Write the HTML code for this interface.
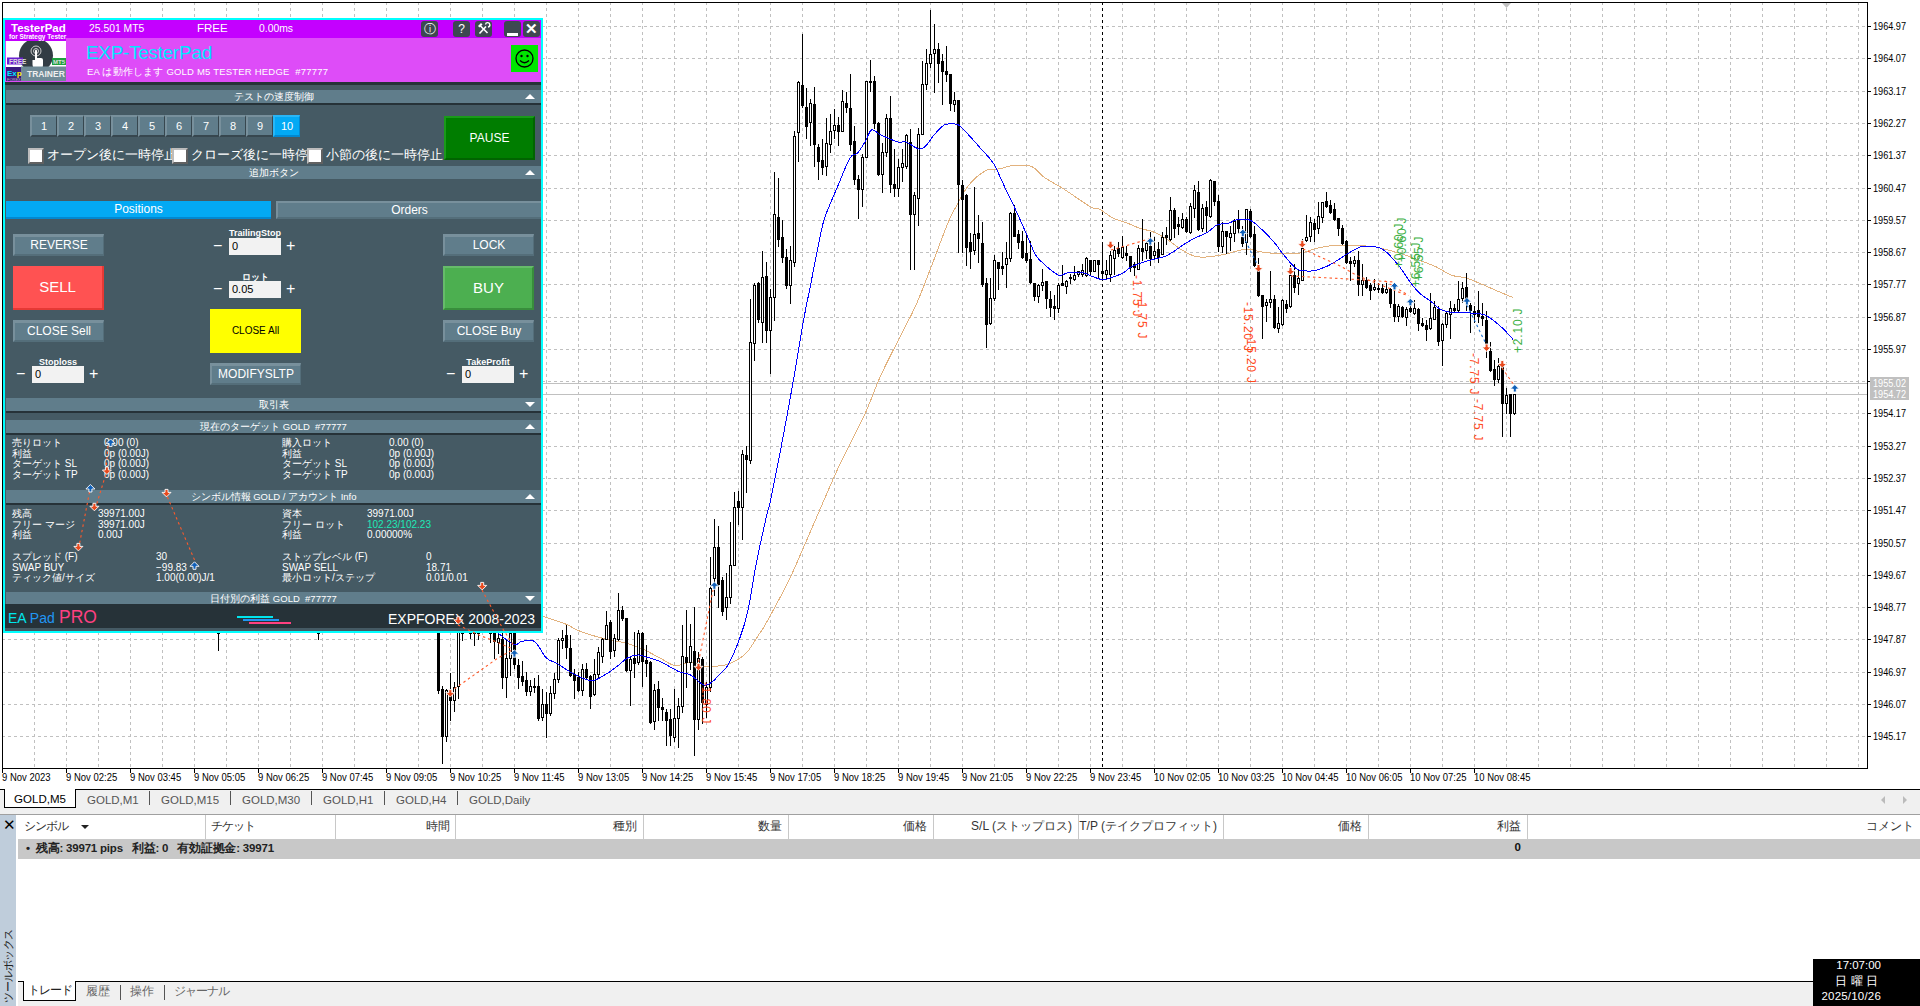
<!DOCTYPE html>
<html><head><meta charset="utf-8">
<style>
*{margin:0;padding:0;box-sizing:border-box}
html,body{width:1920px;height:1006px;overflow:hidden;background:#fff;font-family:"Liberation Sans",sans-serif}
.abs{position:absolute}
.chart{position:absolute;left:0;top:0}
#panel{position:absolute;left:3px;top:18px;width:540px;height:615px;background:#455a64;border:2px solid #00ffff;overflow:hidden}
#panel .p{position:absolute;white-space:nowrap}
.hdr1{left:0;top:0;width:536px;height:18px;background:#c400ff}
.hdr2{left:0;top:18px;width:536px;height:44px;background:#de4cf8}
.sec{left:1px;width:535px;height:15px;background:#607d8b;border-bottom:2px solid #263238;color:#fff;font-size:9.5px;line-height:13px;text-align:center}
.tri-up{position:absolute;right:6px;top:4px;width:0;height:0;border-left:5px solid transparent;border-right:5px solid transparent;border-bottom:5px solid #fff}
.tri-dn{position:absolute;right:6px;top:4px;width:0;height:0;border-left:5px solid transparent;border-right:5px solid transparent;border-top:5px solid #fff}
.nb{top:95px;width:27px;height:22px;background:#607d8b;border-left:2px solid #78909c;border-top:2px solid #78909c;border-right:1px solid #37474f;border-bottom:2px solid #37474f;color:#fff;font-size:11px;line-height:19px;text-align:center}
.btn{background:#607d8b;border-left:2px solid #78909c;border-top:3px solid #78909c;border-right:1px solid #546e7a;border-bottom:2px solid #546e7a;color:#fff;font-size:12px;text-align:center}
.inp{background:#f2f2f2;color:#000;font-size:11px;line-height:17px;padding-left:3px}
.pm{color:#fff;font-size:16px;line-height:16px}
.lbl{color:#fff;font-size:9px;font-weight:bold;text-align:center}
.row{color:#fff;font-size:10px;line-height:10.7px}
.cb{width:16px;height:16px;background:#fff;border-left:2px solid #bdbdbd;border-top:2px solid #bdbdbd;border-right:2px solid #616161;border-bottom:2px solid #616161}
.hb{top:1px;width:17px;height:16px;background:#3e4852;border-radius:3px;color:#fff;font-size:12px;line-height:16px;text-align:center}
.tabbar{position:absolute;left:0;top:789px;width:1920px;height:26px;background:#f0f0f0;border-top:1px solid #000}
.tab{position:absolute;top:0;height:26px;font-family:"Liberation Sans",sans-serif;font-size:12px;line-height:20px;color:#555}
</style></head><body>
<svg class="chart" width="1920" height="789" viewBox="0 0 1920 789" shape-rendering="crispEdges">
<rect x="0" y="0" width="1920" height="789" fill="#fff"/>
<path d="M34.5 2V768 M66.5 2V768 M98.5 2V768 M130.5 2V768 M162.5 2V768 M194.5 2V768 M226.5 2V768 M258.5 2V768 M290.5 2V768 M322.5 2V768 M354.5 2V768 M386.5 2V768 M418.5 2V768 M450.5 2V768 M482.5 2V768 M514.5 2V768 M546.5 2V768 M578.5 2V768 M610.5 2V768 M642.5 2V768 M674.5 2V768 M706.5 2V768 M738.5 2V768 M770.5 2V768 M802.5 2V768 M834.5 2V768 M866.5 2V768 M898.5 2V768 M930.5 2V768 M962.5 2V768 M994.5 2V768 M1026.5 2V768 M1058.5 2V768 M1090.5 2V768 M1122.5 2V768 M1154.5 2V768 M1186.5 2V768 M1218.5 2V768 M1250.5 2V768 M1282.5 2V768 M1314.5 2V768 M1346.5 2V768 M1378.5 2V768 M1410.5 2V768 M1442.5 2V768 M1474.5 2V768 M1506.5 2V768 M1538.5 2V768 M1570.5 2V768 M1602.5 2V768 M1634.5 2V768 M1666.5 2V768 M1698.5 2V768 M1730.5 2V768 M1762.5 2V768 M1794.5 2V768 M1826.5 2V768 M1858.5 2V768 M2 26.5H1867 M2 58.5H1867 M2 91.5H1867 M2 123.5H1867 M2 155.5H1867 M2 188.5H1867 M2 220.5H1867 M2 252.5H1867 M2 284.5H1867 M2 317.5H1867 M2 349.5H1867 M2 381.5H1867 M2 413.5H1867 M2 446.5H1867 M2 478.5H1867 M2 510.5H1867 M2 543.5H1867 M2 575.5H1867 M2 607.5H1867 M2 639.5H1867 M2 672.5H1867 M2 704.5H1867 M2 736.5H1867" stroke="#c0c0c0" stroke-width="1" stroke-dasharray="3 3" fill="none"/>
<path d="M3 383.5H1867M3 394.5H1867" stroke="#c0c0c0" stroke-width="1" fill="none"/>
<path d="M1102.5 2V768" stroke="#000" stroke-width="1" stroke-dasharray="3 3" fill="none"/>
<path d="M1502 3H1511L1506.5 8Z" fill="#c0c0c0" shape-rendering="auto"/>
<path d="M542 616 C545.8 617.3 558.6 621.2 564.9 623.7 C571.1 626.2 573.2 628.6 579.5 631 C585.8 633.4 594.5 636.2 602.5 638.3 C610.5 640.4 620.5 641.6 627.5 643.5 C634.5 645.4 638.8 647.4 644.2 649.8 C649.6 652.2 654.8 655.4 660 658 C665.2 660.6 670.1 664.9 675.2 665.6 C680.3 666.3 685.3 662.1 690.4 662.2 C695.5 662.4 699.7 666.1 705.6 666.5 C711.5 666.9 720.5 665.9 725.9 664.8 C731.2 663.7 734 662 737.7 659.7 C741.4 657.4 744.2 655.7 747.9 651.2 C751.6 646.7 757.5 636.4 760 632.7 C762.5 629 760.1 633.6 762.8 629 C765.5 624.4 771.3 613.8 776 605 C780.7 596.2 784.4 590.3 790.9 576.2 C797.4 562.1 807.1 539.1 815.2 520.5 C823.3 501.9 831.5 482.2 839.6 464.8 C847.7 447.4 857 431.1 864 416 C871 400.9 874.9 388.3 881.3 374.4 C887.7 360.5 896.4 344.2 902.2 332.6 C908 321 911.5 315.2 916.1 304.8 C920.7 294.4 924.7 283.7 930 270 C935.3 256.3 943.6 233.4 948 222.7 C952.4 212 953 212.2 956.4 206 C959.8 199.8 963.7 191.3 968.5 185.5 C973.3 179.7 980 173.7 985.2 170.9 C990.4 168.1 995.3 169.7 999.8 168.8 C1004.3 167.9 1007.2 166.1 1012.4 165.7 C1017.6 165.3 1026 164.4 1031.2 166.3 C1036.4 168.2 1039.6 174 1043.7 177 C1047.8 180 1052.4 182.2 1056 184.4 C1059.6 186.6 1059.6 186.3 1065.3 190 C1071 193.7 1084.5 203.4 1090.3 206.7 C1096.1 209.9 1096.3 207.7 1100 209.5 C1103.7 211.3 1107.9 215.5 1112.6 217.8 C1117.2 220.1 1123 221.5 1127.9 223.4 C1132.8 225.3 1137.8 227.7 1141.8 229 C1145.8 230.3 1147.6 229.7 1151.6 231.2 C1155.5 232.7 1160.6 235.2 1165.5 238.2 C1170.4 241.2 1175.9 246.3 1180.8 249.3 C1185.7 252.3 1190.5 254.9 1194.7 256.2 C1198.9 257.5 1201.2 257.2 1205.8 257 C1210.4 256.8 1215.8 256.1 1222.5 254.8 C1229.2 253.5 1239.1 249.7 1246 249.3 C1252.9 248.9 1257 251.6 1263.9 252.4 C1270.9 253.2 1281.1 254 1287.7 254 C1294.3 254 1298.3 253.5 1303.6 252.4 C1308.9 251.3 1313.4 248.8 1319.5 247.6 C1325.6 246.4 1332 245.4 1340 245.2 C1348 244.9 1361.3 245.7 1367.8 246.1 C1374.3 246.5 1373.7 246.5 1379 247.7 C1384.3 248.9 1393.5 251.5 1399.6 253.3 C1405.7 255.2 1409.4 256.6 1415.5 258.8 C1421.6 261.1 1430 264.1 1436 266.8 C1442 269.5 1446.5 273.4 1451.5 275.2 C1456.5 277 1460.4 276.3 1465.8 277.9 C1471.2 279.5 1478.3 282.8 1483.7 285 C1489.1 287.2 1493.1 289.2 1498 291.3 C1502.9 293.4 1510.7 296.6 1513.2 297.6" stroke="#e2b27e" stroke-width="1" fill="none" shape-rendering="crispEdges"/>
<path d="M218.5 632V651 M318.5 632V640 M438.5 632V694 M442.5 686V764 M446.5 689V742 M450.5 673V721 M454.5 682V712 M458.5 632V699 M462.5 632V641 M470.5 632V639 M474.5 632V646 M478.5 632V640 M490.5 632V643 M494.5 632V659 M498.5 632V654 M502.5 632V689 M506.5 640V698 M510.5 632V676 M514.5 632V669 M518.5 659V689 M522.5 661V686 M526.5 672V696 M530.5 680V696 M534.5 678V693 M538.5 675V721 M542.5 689V721 M546.5 692V738 M550.5 686V716 M554.5 673V699 M558.5 638V683 M562.5 630V649 M566.5 625V659 M570.5 635V677 M574.5 669V699 M578.5 672V692 M582.5 664V696 M586.5 663V680 M590.5 675V709 M594.5 659V696 M598.5 647V678 M602.5 638V663 M606.5 611V640 M610.5 620V659 M614.5 634V657 M618.5 593V641 M622.5 606V621 M626.5 618V672 M630.5 656V706 M634.5 632V678 M638.5 630V665 M642.5 632V687 M646.5 645V677 M650.5 661V724 M654.5 684V730 M658.5 681V721 M662.5 698V721 M666.5 709V746 M670.5 709V746 M674.5 689V742 M678.5 698V748 M682.5 625V713 M686.5 610V688 M690.5 624V670 M694.5 607V756 M698.5 652V730 M702.5 657V724 M706.5 682V718 M710.5 557V692 M714.5 519V596 M718.5 526V608 M722.5 577V616 M726.5 573V620 M730.5 522V604 M734.5 492V566 M738.5 491V525 M742.5 450V540 M746.5 446V493 M750.5 299V464 M754.5 283V361 M758.5 282V323 M762.5 251V343 M766.5 262V343 M770.5 289V374 M774.5 172V321 M778.5 178V247 M782.5 220V263 M786.5 249V289 M790.5 246V304 M794.5 131V267 M798.5 81V162 M802.5 34V108 M806.5 88V139 M810.5 99V146 M814.5 87V167 M818.5 144V180 M822.5 139V175 M826.5 118V176 M830.5 114V153 M834.5 109V139 M838.5 117V146 M842.5 90V132 M846.5 92V113 M850.5 74V151 M854.5 126V185 M858.5 175V219 M862.5 154V207 M866.5 81V158 M870.5 60V92 M874.5 76V129 M878.5 122V176 M882.5 143V193 M886.5 114V157 M890.5 96V193 M894.5 149V197 M898.5 159V197 M902.5 149V182 M906.5 134V169 M910.5 129V270 M914.5 192V270 M918.5 128V226 M922.5 61V135 M926.5 49V90 M930.5 10V68 M934.5 24V93 M938.5 43V83 M942.5 54V105 M946.5 46V82 M950.5 74V111 M954.5 92V112 M958.5 100V253 M962.5 180V253 M966.5 194V266 M970.5 233V269 M974.5 187V255 M978.5 215V263 M982.5 222V287 M986.5 278V348 M990.5 278V325 M994.5 255V301 M998.5 262V290 M1002.5 252V275 M1006.5 242V288 M1010.5 212V262 M1014.5 205V237 M1018.5 230V249 M1022.5 231V259 M1026.5 233V263 M1030.5 241V284 M1034.5 283V301 M1038.5 284V303 M1042.5 269V291 M1046.5 281V309 M1050.5 291V317 M1054.5 295V320 M1058.5 283V313 M1062.5 265V286 M1066.5 280V294 M1070.5 274V284 M1074.5 266V281 M1078.5 271V277 M1082.5 264V277 M1086.5 257V277 M1090.5 260V276 M1094.5 260V272 M1098.5 260V279 M1102.5 242V281 M1106.5 260V280 M1110.5 251V282 M1114.5 246V275 M1118.5 242V257 M1122.5 236V259 M1126.5 246V261 M1130.5 256V272 M1134.5 262V276 M1138.5 245V270 M1142.5 219V261 M1146.5 241V259 M1150.5 232V266 M1154.5 237V259 M1158.5 242V263 M1162.5 232V255 M1166.5 227V245 M1170.5 197V241 M1174.5 208V238 M1178.5 217V235 M1182.5 213V229 M1186.5 217V233 M1190.5 203V234 M1194.5 185V218 M1198.5 181V231 M1202.5 204V232 M1206.5 201V233 M1210.5 179V218 M1214.5 181V206 M1218.5 195V252 M1222.5 222V253 M1226.5 231V254 M1230.5 226V251 M1234.5 219V242 M1238.5 210V234 M1242.5 226V247 M1246.5 209V255 M1250.5 209V238 M1254.5 226V267 M1258.5 258V297 M1262.5 295V339 M1266.5 299V322 M1270.5 271V308 M1274.5 295V329 M1278.5 307V333 M1282.5 299V326 M1286.5 300V313 M1290.5 265V308 M1294.5 264V293 M1298.5 270V295 M1302.5 239V281 M1306.5 215V242 M1310.5 217V242 M1314.5 219V242 M1318.5 202V234 M1322.5 202V223 M1326.5 192V208 M1330.5 200V214 M1334.5 203V221 M1338.5 218V236 M1342.5 225V245 M1346.5 240V264 M1350.5 257V281 M1354.5 256V267 M1358.5 251V296 M1362.5 264V296 M1366.5 277V289 M1370.5 283V300 M1374.5 279V291 M1378.5 283V293 M1382.5 284V294 M1386.5 283V294 M1390.5 288V308 M1394.5 289V322 M1398.5 304V322 M1402.5 306V318 M1406.5 307V326 M1410.5 301V313 M1414.5 300V315 M1418.5 308V331 M1422.5 318V327 M1426.5 320V341 M1430.5 293V330 M1434.5 301V320 M1438.5 306V346 M1442.5 323V366 M1446.5 311V328 M1450.5 301V339 M1454.5 304V313 M1458.5 281V312 M1462.5 282V303 M1466.5 273V311 M1470.5 303V333 M1474.5 306V323 M1478.5 291V323 M1482.5 303V326 M1486.5 311V358 M1490.5 342V372 M1494.5 360V386 M1498.5 358V383 M1502.5 362V437 M1506.5 388V414 M1510.5 394V437 M1514.5 394V415" stroke="#000" stroke-width="1" fill="none"/>
<path d="M217 632h3v2h-3Z M317 632h3v2h-3Z M437 632h3v59h-3Z M441 689h3v48h-3Z M449 695h3v6h-3Z M461 632h3v2h-3Z M469 632h3v2h-3Z M473 632h3v2h-3Z M477 632h3v2h-3Z M489 632h3v2h-3Z M493 632h3v10h-3Z M501 639h3v39h-3Z M513 632h3v33h-3Z M517 665h3v13h-3Z M521 676h3v6h-3Z M525 680h3v12h-3Z M533 686h3v2h-3Z M537 686h3v33h-3Z M545 704h3v10h-3Z M565 635h3v13h-3Z M569 648h3v28h-3Z M573 674h3v7h-3Z M577 677h3v14h-3Z M585 669h3v9h-3Z M589 676h3v21h-3Z M609 622h3v30h-3Z M621 610h3v9h-3Z M625 618h3v53h-3Z M633 658h3v6h-3Z M641 633h3v29h-3Z M645 660h3v4h-3Z M649 662h3v61h-3Z M657 689h3v19h-3Z M661 707h3v3h-3Z M665 712h3v9h-3Z M669 719h3v17h-3Z M685 657h3v6h-3Z M693 651h3v69h-3Z M701 659h3v44h-3Z M717 547h3v38h-3Z M721 580h3v32h-3Z M737 501h3v7h-3Z M745 455h3v5h-3Z M757 283h3v37h-3Z M765 276h3v55h-3Z M777 217h3v23h-3Z M781 237h3v21h-3Z M785 257h3v29h-3Z M801 85h3v21h-3Z M805 107h3v20h-3Z M813 104h3v41h-3Z M817 147h3v15h-3Z M821 160h3v8h-3Z M837 125h3v7h-3Z M845 103h3v5h-3Z M849 108h3v37h-3Z M853 141h3v39h-3Z M857 179h3v11h-3Z M869 81h3v2h-3Z M873 81h3v43h-3Z M877 123h3v52h-3Z M889 118h3v67h-3Z M893 184h3v5h-3Z M909 142h3v73h-3Z M937 49h3v15h-3Z M941 61h3v11h-3Z M945 71h3v4h-3Z M949 74h3v30h-3Z M957 100h3v85h-3Z M961 185h3v15h-3Z M965 195h3v53h-3Z M969 242h3v10h-3Z M977 233h3v6h-3Z M981 243h3v42h-3Z M985 283h3v42h-3Z M997 262h3v7h-3Z M1001 266h3v3h-3Z M1013 213h3v24h-3Z M1017 234h3v9h-3Z M1021 241h3v17h-3Z M1025 253h3v8h-3Z M1029 259h3v24h-3Z M1033 283h3v14h-3Z M1045 281h3v18h-3Z M1049 299h3v9h-3Z M1053 306h3v3h-3Z M1061 283h3v3h-3Z M1069 277h3v2h-3Z M1089 260h3v12h-3Z M1097 260h3v5h-3Z M1101 271h3v3h-3Z M1117 248h3v6h-3Z M1125 253h3v3h-3Z M1129 256h3v12h-3Z M1133 264h3v4h-3Z M1141 248h3v4h-3Z M1149 246h3v13h-3Z M1157 249h3v9h-3Z M1165 235h3v3h-3Z M1173 210h3v19h-3Z M1177 224h3v3h-3Z M1185 219h3v13h-3Z M1197 192h3v38h-3Z M1205 207h3v9h-3Z M1213 181h3v21h-3Z M1217 201h3v46h-3Z M1225 231h3v6h-3Z M1237 219h3v10h-3Z M1241 237h3v7h-3Z M1249 211h3v26h-3Z M1253 234h3v32h-3Z M1257 269h3v27h-3Z M1261 295h3v12h-3Z M1273 299h3v29h-3Z M1285 304h3v5h-3Z M1293 275h3v13h-3Z M1313 223h3v7h-3Z M1325 201h3v6h-3Z M1329 205h3v8h-3Z M1333 209h3v11h-3Z M1337 218h3v11h-3Z M1341 228h3v16h-3Z M1345 241h3v22h-3Z M1349 261h3v3h-3Z M1357 260h3v25h-3Z M1365 280h3v8h-3Z M1369 285h3v6h-3Z M1377 288h3v2h-3Z M1381 288h3v5h-3Z M1389 289h3v15h-3Z M1393 304h3v13h-3Z M1401 307h3v10h-3Z M1409 308h3v4h-3Z M1417 309h3v15h-3Z M1421 323h3v3h-3Z M1425 325h3v5h-3Z M1437 309h3v33h-3Z M1453 308h3v3h-3Z M1465 287h3v12h-3Z M1469 305h3v6h-3Z M1473 311h3v4h-3Z M1477 310h3v7h-3Z M1481 316h3v3h-3Z M1485 320h3v25h-3Z M1489 351h3v20h-3Z M1493 369h3v11h-3Z M1501 366h3v38h-3Z M1509 394h3v20h-3Z" fill="#000"/>
<path d="M445 690h3v47h-3Z M453 687h3v14h-3Z M457 632h3v55h-3Z M497 638h3v5h-3Z M505 658h3v20h-3Z M509 633h3v26h-3Z M529 686h3v6h-3Z M541 704h3v14h-3Z M549 693h3v21h-3Z M553 679h3v15h-3Z M557 640h3v40h-3Z M561 638h3v3h-3Z M581 669h3v22h-3Z M593 674h3v21h-3Z M597 652h3v23h-3Z M601 639h3v18h-3Z M605 625h3v15h-3Z M613 638h3v13h-3Z M617 610h3v30h-3Z M629 659h3v12h-3Z M637 633h3v30h-3Z M653 690h3v32h-3Z M673 718h3v20h-3Z M677 706h3v13h-3Z M681 656h3v51h-3Z M689 646h3v17h-3Z M697 658h3v62h-3Z M705 687h3v18h-3Z M709 588h3v100h-3Z M713 547h3v32h-3Z M725 597h3v11h-3Z M729 565h3v33h-3Z M733 507h3v59h-3Z M741 454h3v54h-3Z M749 342h3v119h-3Z M753 285h3v59h-3Z M761 277h3v46h-3Z M769 297h3v34h-3Z M773 214h3v84h-3Z M789 260h3v26h-3Z M793 136h3v127h-3Z M797 82h3v51h-3Z M809 103h3v20h-3Z M825 143h3v24h-3Z M829 131h3v14h-3Z M833 125h3v6h-3Z M841 101h3v31h-3Z M861 157h3v33h-3Z M865 81h3v77h-3Z M881 152h3v23h-3Z M885 118h3v35h-3Z M897 167h3v22h-3Z M901 163h3v5h-3Z M905 135h3v32h-3Z M913 195h3v20h-3Z M917 134h3v65h-3Z M921 84h3v51h-3Z M925 63h3v22h-3Z M929 54h3v10h-3Z M933 49h3v5h-3Z M953 100h3v5h-3Z M973 234h3v17h-3Z M989 298h3v26h-3Z M993 260h3v39h-3Z M1005 258h3v7h-3Z M1009 213h3v46h-3Z M1037 285h3v12h-3Z M1041 282h3v4h-3Z M1057 285h3v24h-3Z M1065 281h3v6h-3Z M1073 275h3v5h-3Z M1077 271h3v4h-3Z M1081 270h3v5h-3Z M1085 258h3v18h-3Z M1093 260h3v12h-3Z M1105 270h3v5h-3Z M1109 255h3v20h-3Z M1113 250h3v9h-3Z M1121 247h3v11h-3Z M1137 248h3v22h-3Z M1145 243h3v8h-3Z M1153 251h3v5h-3Z M1161 237h3v18h-3Z M1169 210h3v30h-3Z M1181 219h3v9h-3Z M1189 206h3v27h-3Z M1193 190h3v19h-3Z M1201 208h3v21h-3Z M1209 180h3v37h-3Z M1221 231h3v16h-3Z M1229 233h3v5h-3Z M1233 221h3v13h-3Z M1245 209h3v34h-3Z M1265 302h3v4h-3Z M1269 299h3v4h-3Z M1277 323h3v6h-3Z M1281 300h3v25h-3Z M1289 275h3v32h-3Z M1297 278h3v6h-3Z M1301 248h3v33h-3Z M1305 237h3v4h-3Z M1309 222h3v15h-3Z M1317 216h3v13h-3Z M1321 202h3v16h-3Z M1353 260h3v4h-3Z M1361 280h3v5h-3Z M1373 287h3v3h-3Z M1385 289h3v4h-3Z M1397 306h3v11h-3Z M1405 309h3v9h-3Z M1413 308h3v6h-3Z M1429 318h3v11h-3Z M1433 307h3v13h-3Z M1441 324h3v17h-3Z M1445 313h3v12h-3Z M1449 308h3v7h-3Z M1457 299h3v12h-3Z M1461 288h3v11h-3Z M1497 366h3v14h-3Z M1505 395h3v9h-3Z M1513 394h3v20h-3Z" fill="#000"/>
<path d="M446 691h1v45h-1Z M454 688h1v12h-1Z M458 633h1v53h-1Z M498 639h1v3h-1Z M506 659h1v18h-1Z M510 634h1v24h-1Z M530 687h1v4h-1Z M542 705h1v12h-1Z M550 694h1v19h-1Z M554 680h1v13h-1Z M558 641h1v38h-1Z M562 639h1v1h-1Z M582 670h1v20h-1Z M594 675h1v19h-1Z M598 653h1v21h-1Z M602 640h1v16h-1Z M606 626h1v13h-1Z M614 639h1v11h-1Z M618 611h1v28h-1Z M630 660h1v10h-1Z M638 634h1v28h-1Z M654 691h1v30h-1Z M674 719h1v18h-1Z M678 707h1v11h-1Z M682 657h1v49h-1Z M690 647h1v15h-1Z M698 659h1v60h-1Z M706 688h1v16h-1Z M710 589h1v98h-1Z M714 548h1v30h-1Z M726 598h1v9h-1Z M730 566h1v31h-1Z M734 508h1v57h-1Z M742 455h1v52h-1Z M750 343h1v117h-1Z M754 286h1v57h-1Z M762 278h1v44h-1Z M770 298h1v32h-1Z M774 215h1v82h-1Z M790 261h1v24h-1Z M794 137h1v125h-1Z M798 83h1v49h-1Z M810 104h1v18h-1Z M826 144h1v22h-1Z M830 132h1v12h-1Z M834 126h1v4h-1Z M842 102h1v29h-1Z M862 158h1v31h-1Z M866 82h1v75h-1Z M882 153h1v21h-1Z M886 119h1v33h-1Z M898 168h1v20h-1Z M902 164h1v3h-1Z M906 136h1v30h-1Z M914 196h1v18h-1Z M918 135h1v63h-1Z M922 85h1v49h-1Z M926 64h1v20h-1Z M930 55h1v8h-1Z M934 50h1v3h-1Z M954 101h1v3h-1Z M974 235h1v15h-1Z M990 299h1v24h-1Z M994 261h1v37h-1Z M1006 259h1v5h-1Z M1010 214h1v44h-1Z M1038 286h1v10h-1Z M1042 283h1v2h-1Z M1058 286h1v22h-1Z M1066 282h1v4h-1Z M1074 276h1v3h-1Z M1078 272h1v2h-1Z M1082 271h1v3h-1Z M1086 259h1v16h-1Z M1094 261h1v10h-1Z M1106 271h1v3h-1Z M1110 256h1v18h-1Z M1114 251h1v7h-1Z M1122 248h1v9h-1Z M1138 249h1v20h-1Z M1146 244h1v6h-1Z M1154 252h1v3h-1Z M1162 238h1v16h-1Z M1170 211h1v28h-1Z M1182 220h1v7h-1Z M1190 207h1v25h-1Z M1194 191h1v17h-1Z M1202 209h1v19h-1Z M1210 181h1v35h-1Z M1222 232h1v14h-1Z M1230 234h1v3h-1Z M1234 222h1v11h-1Z M1246 210h1v32h-1Z M1266 303h1v2h-1Z M1270 300h1v2h-1Z M1278 324h1v4h-1Z M1282 301h1v23h-1Z M1290 276h1v30h-1Z M1298 279h1v4h-1Z M1302 249h1v31h-1Z M1306 238h1v2h-1Z M1310 223h1v13h-1Z M1318 217h1v11h-1Z M1322 203h1v14h-1Z M1354 261h1v2h-1Z M1362 281h1v3h-1Z M1374 288h1v1h-1Z M1386 290h1v2h-1Z M1398 307h1v9h-1Z M1406 310h1v7h-1Z M1414 309h1v4h-1Z M1430 319h1v9h-1Z M1434 308h1v11h-1Z M1442 325h1v15h-1Z M1446 314h1v10h-1Z M1450 309h1v5h-1Z M1458 300h1v10h-1Z M1462 289h1v9h-1Z M1498 367h1v12h-1Z M1506 396h1v7h-1Z M1514 395h1v18h-1Z" fill="#fff"/>
<path d="M498 633 C500.7 634.9 510 643.2 514 644.6 C518 646 518.4 641.9 521.8 641.4 C525.2 640.9 530.3 638.7 534.4 641.4 C538.5 644.1 542.5 654.1 546.2 657.8 C549.9 661.4 551.6 660.5 556.5 663.3 C561.4 666.1 569.4 671.9 575.3 674.8 C581.2 677.7 586.8 680.9 592 680.7 C597.2 680.5 602.4 676.2 606.6 673.8 C610.8 671.4 613.5 669.1 617 666.5 C620.5 663.9 624 659.9 627.5 658 C631 656.1 634.9 655.2 638 655 C641.1 654.8 642.6 655.9 646.3 657 C650 658.1 654.6 659 660 661.4 C665.4 663.8 673.5 669.2 678.6 671.5 C683.7 673.8 686.2 672.6 690.4 674.9 C694.6 677.1 700.2 683.9 703.9 685 C707.6 686.1 709.9 683.4 712.4 681.7 C714.9 680 716.6 677.6 719.1 674.9 C721.6 672.2 724.2 671.5 727.6 665.6 C731 659.7 736 648.5 739.4 639.4 C742.8 630.2 745.1 623.4 747.9 610.7 C750.7 598 753.2 579.2 756.3 563.4 C759.4 547.6 764.3 525.8 766.6 515.7 C768.9 505.6 767.7 513.8 770 503 C772.3 492.2 776.6 470.7 780.4 451 C784.2 431.3 788.8 406.1 792.6 384.8 C796.4 363.5 800 340.2 803 323.3 C806 306.4 808.1 297.7 810.9 283.3 C813.7 268.9 817.6 248.2 820 237 C822.4 225.8 822.2 225 825.2 216.4 C828.2 207.8 834 195.1 838.1 185.4 C842.2 175.7 846.6 163.6 849.8 158.2 C853 152.8 854.9 155.8 857.5 153 C860.1 150.2 862.9 145.3 865.3 141.4 C867.7 137.5 869.1 130.9 871.7 129.8 C874.3 128.7 876.6 133 881 135 C885.4 137 893.6 140.8 897.8 142 C902 143.2 902.7 140.8 906.2 142 C909.7 143.2 915.5 148.3 918.7 149 C922 149.7 923.2 148.3 925.7 146 C928.2 143.7 931 138.5 934 135 C937 131.5 941 127 943.8 125.2 C946.6 123.4 948.2 123.9 950.7 123.9 C953.2 123.9 955.8 123.1 959 125.2 C962.2 127.3 966.2 132.3 970 136.4 C973.8 140.5 978.1 145.5 982 150 C985.9 154.5 989.9 157.7 993.6 163.6 C997.3 169.5 1000.5 178.2 1004 185.5 C1007.5 192.8 1011 199.9 1014.5 207.4 C1018 214.9 1021.4 222.6 1024.9 230.4 C1028.4 238.2 1032.2 248.8 1035.3 254.4 C1038.4 260 1041.2 261.3 1043.7 263.8 C1046.2 266.3 1047.3 267.4 1050 269.3 C1052.7 271.2 1056.7 274.9 1059.7 275.5 C1062.7 276.1 1064 273.2 1068 272.8 C1072 272.4 1079.5 272.2 1083.4 272.8 C1087.4 273.4 1088.5 275.1 1091.7 276.2 C1094.9 277.3 1099.5 279.5 1102.8 279.7 C1106 279.9 1108 278.7 1111.2 277.6 C1114.5 276.6 1119 275.1 1122.3 273.4 C1125.5 271.7 1127.9 268.8 1130.7 267.2 C1133.5 265.6 1135.8 264.9 1139 263.7 C1142.2 262.5 1145.3 261.6 1150 260.2 C1154.7 258.8 1161.1 258.2 1166.9 255.5 C1172.7 252.8 1180.2 246.7 1185 243.7 C1189.8 240.7 1192.3 239.3 1196 237.5 C1199.7 235.7 1203.7 234.7 1207.2 232.6 C1210.7 230.5 1213.3 226.6 1217 225 C1220.7 223.4 1226.2 223.7 1229.4 222.9 C1232.6 222.1 1232.8 220.4 1236.4 220 C1240 219.6 1245.1 217.3 1251 220.6 C1256.9 223.9 1266.5 234 1271.8 239.6 C1277.1 245.2 1279 249.2 1283 254 C1287 258.8 1292.3 265.5 1295.7 268.3 C1299.1 271.1 1300.5 270.3 1303.6 270.7 C1306.6 271.1 1310.3 271.4 1314 270.7 C1317.7 270 1322.9 267.9 1325.9 266.7 C1328.9 265.5 1329.9 264.8 1332.2 263.5 C1334.5 262.2 1337.8 260.1 1340 258.7 C1342.2 257.3 1342.5 256.7 1345.5 254.9 C1348.5 253.1 1355.1 249.2 1358.3 247.7 C1361.5 246.2 1361.1 246.1 1364.6 246.1 C1368 246.1 1375.3 246.6 1379 247.7 C1382.7 248.8 1383.5 249.3 1386.9 252.5 C1390.3 255.7 1395.4 261.4 1399.6 266.8 C1403.8 272.2 1408.8 280.5 1412.3 285 C1415.8 289.5 1417.1 291 1420.3 293.8 C1423.5 296.6 1428.3 299.4 1431.4 301.8 C1434.5 304.2 1436.2 306.6 1439 308.3 C1441.8 310 1443.4 311.1 1447.9 311.9 C1452.4 312.6 1459.8 312.4 1465.8 312.8 C1471.8 313.2 1478.6 313 1483.7 314.6 C1488.8 316.2 1492.6 319.9 1496.2 322.6 C1499.8 325.3 1502.3 327.9 1505.1 330.7 C1507.9 333.5 1511.8 338.1 1513.2 339.6" stroke="#0000ff" stroke-width="1" fill="none" shape-rendering="crispEdges"/>
<path d="M2.5 2V768.5H1867.5V2.5H2" stroke="#000" stroke-width="1" fill="none"/>
<path d="M1867 26.5h4 M1867 58.5h4 M1867 91.5h4 M1867 123.5h4 M1867 155.5h4 M1867 188.5h4 M1867 220.5h4 M1867 252.5h4 M1867 284.5h4 M1867 317.5h4 M1867 349.5h4 M1867 381.5h4 M1867 413.5h4 M1867 446.5h4 M1867 478.5h4 M1867 510.5h4 M1867 543.5h4 M1867 575.5h4 M1867 607.5h4 M1867 639.5h4 M1867 672.5h4 M1867 704.5h4 M1867 736.5h4" stroke="#000" stroke-width="1"/>
<g font-family="Liberation Sans, sans-serif" font-size="10" fill="#000"><text x="1873" y="30" textLength="33" lengthAdjust="spacingAndGlyphs">1964.97</text><text x="1873" y="62" textLength="33" lengthAdjust="spacingAndGlyphs">1964.07</text><text x="1873" y="95" textLength="33" lengthAdjust="spacingAndGlyphs">1963.17</text><text x="1873" y="127" textLength="33" lengthAdjust="spacingAndGlyphs">1962.27</text><text x="1873" y="159" textLength="33" lengthAdjust="spacingAndGlyphs">1961.37</text><text x="1873" y="192" textLength="33" lengthAdjust="spacingAndGlyphs">1960.47</text><text x="1873" y="224" textLength="33" lengthAdjust="spacingAndGlyphs">1959.57</text><text x="1873" y="256" textLength="33" lengthAdjust="spacingAndGlyphs">1958.67</text><text x="1873" y="288" textLength="33" lengthAdjust="spacingAndGlyphs">1957.77</text><text x="1873" y="321" textLength="33" lengthAdjust="spacingAndGlyphs">1956.87</text><text x="1873" y="353" textLength="33" lengthAdjust="spacingAndGlyphs">1955.97</text><text x="1873" y="385" textLength="33" lengthAdjust="spacingAndGlyphs">1955.07</text><text x="1873" y="417" textLength="33" lengthAdjust="spacingAndGlyphs">1954.17</text><text x="1873" y="450" textLength="33" lengthAdjust="spacingAndGlyphs">1953.27</text><text x="1873" y="482" textLength="33" lengthAdjust="spacingAndGlyphs">1952.37</text><text x="1873" y="514" textLength="33" lengthAdjust="spacingAndGlyphs">1951.47</text><text x="1873" y="547" textLength="33" lengthAdjust="spacingAndGlyphs">1950.57</text><text x="1873" y="579" textLength="33" lengthAdjust="spacingAndGlyphs">1949.67</text><text x="1873" y="611" textLength="33" lengthAdjust="spacingAndGlyphs">1948.77</text><text x="1873" y="643" textLength="33" lengthAdjust="spacingAndGlyphs">1947.87</text><text x="1873" y="676" textLength="33" lengthAdjust="spacingAndGlyphs">1946.97</text><text x="1873" y="708" textLength="33" lengthAdjust="spacingAndGlyphs">1946.07</text><text x="1873" y="740" textLength="33" lengthAdjust="spacingAndGlyphs">1945.17</text></g>
<rect x="1870" y="377" width="39" height="23" fill="#c0c0c0"/>
<g font-family="Liberation Sans, sans-serif" font-size="10" fill="#fff"><text x="1873" y="387" textLength="33" lengthAdjust="spacingAndGlyphs">1955.02</text><text x="1873" y="398" textLength="33" lengthAdjust="spacingAndGlyphs">1954.72</text></g>
<path d="M2.5 768v5 M66.5 768v5 M130.5 768v5 M194.5 768v5 M258.5 768v5 M322.5 768v5 M386.5 768v5 M450.5 768v5 M514.5 768v5 M578.5 768v5 M642.5 768v5 M706.5 768v5 M770.5 768v5 M834.5 768v5 M898.5 768v5 M962.5 768v5 M1026.5 768v5 M1090.5 768v5 M1154.5 768v5 M1218.5 768v5 M1282.5 768v5 M1346.5 768v5 M1410.5 768v5 M1474.5 768v5" stroke="#000" stroke-width="1"/>
<g font-family="Liberation Sans, sans-serif" font-size="10" fill="#000" transform="scale(0.95 1)"><text x="2.1" y="781">9 Nov 2023</text><text x="69.5" y="781">9 Nov 02:25</text><text x="136.8" y="781">9 Nov 03:45</text><text x="204.2" y="781">9 Nov 05:05</text><text x="271.6" y="781">9 Nov 06:25</text><text x="338.9" y="781">9 Nov 07:45</text><text x="406.3" y="781">9 Nov 09:05</text><text x="473.7" y="781">9 Nov 10:25</text><text x="541.1" y="781">9 Nov 11:45</text><text x="608.4" y="781">9 Nov 13:05</text><text x="675.8" y="781">9 Nov 14:25</text><text x="743.2" y="781">9 Nov 15:45</text><text x="810.5" y="781">9 Nov 17:05</text><text x="877.9" y="781">9 Nov 18:25</text><text x="945.3" y="781">9 Nov 19:45</text><text x="1012.6" y="781">9 Nov 21:05</text><text x="1080.0" y="781">9 Nov 22:25</text><text x="1147.4" y="781">9 Nov 23:45</text><text x="1214.7" y="781">10 Nov 02:05</text><text x="1282.1" y="781">10 Nov 03:25</text><text x="1349.5" y="781">10 Nov 04:45</text><text x="1416.8" y="781">10 Nov 06:05</text><text x="1484.2" y="781">10 Nov 07:25</text><text x="1551.6" y="781">10 Nov 08:45</text></g>
</svg>

<div id="panel">
  <div class="p hdr1"></div>
  <div class="p hdr2"></div>
  <div class="p" style="left:0;top:18px;width:61px;height:3px;background:#c400ff"></div>
  <div class="p" style="left:6px;top:2px;color:#fff;font-size:11.5px;font-weight:bold;line-height:13px">TesterPad</div>
  <div class="p" style="left:4px;top:13px;color:#fff;font-size:6.5px;font-weight:bold;line-height:8px">for Strategy Tester</div>
  <div class="p" style="left:84px;top:2px;color:#fff;font-size:11.5px;transform:scaleX(0.9);transform-origin:left">25.501 MT5</div>
  <div class="p" style="left:192px;top:2px;color:#fff;font-size:11.5px">FREE</div>
  <div class="p" style="left:254px;top:2px;color:#fff;font-size:11.5px;transform:scaleX(0.9);transform-origin:left">0.00ms</div>
  <div class="p hb" style="left:416px">&#9432;</div>
  <div class="p hb" style="left:448px">?</div>
  <div class="p hb" style="left:470px"><svg width="17" height="16" style="position:absolute;left:0;top:0"><path d="M4.5 12.5L11 5.5" stroke="#fff" stroke-width="1.6"/><path d="M5 4.5L12.5 12" stroke="#fff" stroke-width="1.6"/><path d="M3 5l3-3l1.5 1.5l-3 3z" fill="#fff"/><path d="M10.5 3.5a2.2 2.2 0 1 1 2.5 2.5" stroke="#fff" stroke-width="1.4" fill="none"/></svg></div>
  <div class="p hb" style="left:499px"><div style="position:absolute;left:3px;top:12px;width:11px;height:3px;background:#fff"></div></div>
  <div class="p hb" style="left:518px;font-size:15px;font-weight:bold">&#10005;</div>
  <!-- logo -->
  <div class="p" style="left:1px;top:21px;width:60px;height:40px;background:#fff;overflow:hidden">
    <svg width="60" height="40" style="position:absolute;left:0;top:0">
      <circle cx="30" cy="14.5" r="17" fill="#323c44"/>
      <circle cx="30" cy="10" r="5" fill="none" stroke="#ccc" stroke-width="1"/>
      <circle cx="30" cy="10" r="2.5" fill="none" stroke="#ccc" stroke-width="1"/>
      <path d="M29 10v9h-2.5v4.5q0 4 4.5 4.5h2q4 0 4 -4v-5q0 -2 -2 -2h-4v-7q0 -1.5 -1 -1.5t-1 1.5z" fill="#fff"/>
      <rect x="1" y="16.5" width="16" height="7" fill="#6a1fd0"/>
      <text x="3" y="22.5" font-size="6.5" font-family="Liberation Sans" fill="#ddd" font-weight="bold">FREE</text>
      <rect x="46" y="17" width="14" height="7" fill="#1fa040"/>
      <text x="47" y="23" font-size="6" font-family="Liberation Sans" fill="#ddd" font-weight="bold">MT5</text>
      <rect x="15" y="25.5" width="45" height="14.5" fill="#6f8a96"/>
      <rect x="0" y="26" width="15" height="14" fill="#3a1a80"/>
      <text x="1" y="35" font-size="8" font-family="Liberation Sans" font-weight="bold" fill="#00e5ff">Ex<tspan fill="#ffee00">p</tspan></text>
      <text x="1" y="39.5" font-size="4" font-family="Liberation Sans" fill="#bbb">FOREX</text>
      <text x="21" y="36" font-size="8.5" font-family="Liberation Sans" font-weight="bold" fill="#eee">TRAINER</text>
    </svg>
  </div>
  <div class="p" style="left:81px;top:23px;color:#00e5ff;font-size:19px;line-height:20px;letter-spacing:-0.3px">EXP-TesterPad</div>
  <div class="p" style="left:82px;top:46px;color:#fff;font-size:9.5px;letter-spacing:0.2px">EA は動作します GOLD M5 TESTER HEDGE &nbsp;#77777</div>
  <div class="p" style="left:506px;top:25px;width:27px;height:27px;background:#00e600">
    <svg width="27" height="27" style="position:absolute;left:0;top:0"><circle cx="13.5" cy="13.5" r="8.5" fill="none" stroke="#000" stroke-width="1.3"/><circle cx="10.5" cy="11" r="1.2"/><circle cx="16.5" cy="11" r="1.2"/><path d="M9 15.5Q13.5 20 18 15.5" fill="none" stroke="#000" stroke-width="1.3"/></svg>
  </div>
  <div class="p" style="left:0;top:62px;width:536px;height:3px;background:#263238"></div>

  <div class="p sec" style="top:70px">テストの速度制御<div class="tri-up"></div></div>
  <div class="p nb" style="left:25px">1</div>
  <div class="p nb" style="left:52px">2</div>
  <div class="p nb" style="left:79px">3</div>
  <div class="p nb" style="left:106px">4</div>
  <div class="p nb" style="left:133px">5</div>
  <div class="p nb" style="left:160px">6</div>
  <div class="p nb" style="left:187px">7</div>
  <div class="p nb" style="left:214px">8</div>
  <div class="p nb" style="left:241px">9</div>
  <div class="p nb" style="left:268px;background:#03a9f4;border-color:#29b6f6 #0288d1 #0288d1 #29b6f6">10</div>
  <div class="p" style="left:439px;top:96px;width:91px;height:44px;background:#007d00;border:2px solid #1a9a1a;border-right-color:#006400;border-bottom-color:#006400;color:#fff;font-size:12px;line-height:40px;text-align:center">PAUSE</div>
  <div class="p cb" style="left:23px;top:128px"></div>
  <div class="p" style="left:42px;top:127px;color:#fff;font-size:13px;line-height:16px">オープン後に一時停止</div>
  <div class="p cb" style="left:167px;top:128px"></div>
  <div class="p" style="left:186px;top:127px;color:#fff;font-size:13px;line-height:16px">クローズ後に一時停止</div>
  <div class="p cb" style="left:302px;top:128px"></div>
  <div class="p" style="left:321px;top:127px;color:#fff;font-size:13px;line-height:16px">小節の後に一時停止</div>
  <div class="p sec" style="top:146px;border-bottom:none;height:13px">追加ボタン<div class="tri-up"></div></div>

  <div class="p" style="left:1px;top:181px;width:265px;height:18px;background:#03a9f4;border-bottom:2px solid #0288d1;color:#fff;font-size:12px;line-height:17px;text-align:center">Positions</div>
  <div class="p" style="left:271px;top:181px;width:265px;height:18px;background:#607d8b;border-left:2px solid #78909c;border-top:2px solid #78909c;border-bottom:2px solid #546e7a;color:#fff;font-size:12px;line-height:15px;text-align:center">Orders</div>

  <div class="p btn" style="left:8px;top:214px;width:91px;height:22px;line-height:16px">REVERSE</div>
  <div class="p" style="left:8px;top:246px;width:91px;height:44px;background:#ff5252;border-right:2px solid #e53935;border-bottom:2px solid #e53935;color:#fff;font-size:15px;line-height:42px;text-align:center">SELL</div>
  <div class="p btn" style="left:8px;top:300px;width:91px;height:22px;line-height:16px">CLOSE Sell</div>
  <div class="p lbl" style="left:27px;top:337px;width:52px">Stoploss</div>
  <div class="p pm" style="left:11px;top:346px">&minus;</div>
  <div class="p inp" style="left:27px;top:346px;width:52px;height:17px">0</div>
  <div class="p pm" style="left:84px;top:346px">+</div>

  <div class="p lbl" style="left:224px;top:208px;width:52px">TrailingStop</div>
  <div class="p pm" style="left:208px;top:218px">&minus;</div>
  <div class="p inp" style="left:224px;top:218px;width:52px;height:17px">0</div>
  <div class="p pm" style="left:281px;top:218px">+</div>
  <div class="p lbl" style="left:224px;top:251px;width:52px">ロット</div>
  <div class="p pm" style="left:208px;top:261px">&minus;</div>
  <div class="p inp" style="left:224px;top:261px;width:52px;height:17px">0.05</div>
  <div class="p pm" style="left:281px;top:261px">+</div>
  <div class="p" style="left:205px;top:289px;width:91px;height:44px;background:#ffff00;color:#000;font-size:10px;line-height:44px;text-align:center">CLOSE All</div>
  <div class="p btn" style="left:205px;top:343px;width:91px;height:22px;line-height:16px">MODIFYSLTP</div>

  <div class="p btn" style="left:438px;top:214px;width:91px;height:22px;line-height:16px">LOCK</div>
  <div class="p" style="left:438px;top:246px;width:91px;height:44px;background:#4caf50;border-left:2px solid #66bb6a;border-top:2px solid #66bb6a;border-right:2px solid #388e3c;border-bottom:2px solid #388e3c;color:#fff;font-size:15px;line-height:40px;text-align:center">BUY</div>
  <div class="p btn" style="left:438px;top:300px;width:91px;height:22px;line-height:16px">CLOSE Buy</div>
  <div class="p lbl" style="left:457px;top:337px;width:52px">TakeProfit</div>
  <div class="p pm" style="left:441px;top:346px">&minus;</div>
  <div class="p inp" style="left:457px;top:346px;width:52px;height:17px">0</div>
  <div class="p pm" style="left:514px;top:346px">+</div>

  <div class="p sec" style="top:378px">取引表<div class="tri-dn"></div></div>
  <div class="p sec" style="top:400px">現在のターゲット GOLD &nbsp;#77777<div class="tri-up"></div></div>
  <div class="p row" style="left:7px;top:418px">売りロット<br>利益<br>ターゲット SL<br>ターゲット TP</div>
  <div class="p row" style="left:99px;top:418px">0.00 (0)<br>0p (0.00J)<br>0p (0.00J)<br>0p (0.00J)</div>
  <div class="p row" style="left:277px;top:418px">購入ロット<br>利益<br>ターゲット SL<br>ターゲット TP</div>
  <div class="p row" style="left:384px;top:418px">0.00 (0)<br>0p (0.00J)<br>0p (0.00J)<br>0p (0.00J)</div>
  <div class="p sec" style="top:470px">シンボル情報 GOLD / アカウント Info<div class="tri-up"></div></div>
  <div class="p row" style="left:7px;top:489px">残高<br>フリー マージ<br>利益</div>
  <div class="p row" style="left:93px;top:489px">39971.00J<br>39971.00J<br>0.00J</div>
  <div class="p row" style="left:277px;top:489px">資本<br>フリー ロット<br>利益</div>
  <div class="p row" style="left:362px;top:489px">39971.00J<br><span style="color:#1de9b6">102.23/102.23</span><br>0.00000%</div>
  <div class="p row" style="left:7px;top:532px">スプレッド (F)<br>SWAP BUY<br>ティック値/サイズ</div>
  <div class="p row" style="left:151px;top:532px">30<br>−99.83<br>1.00(0.00)J/1</div>
  <div class="p row" style="left:277px;top:532px">ストップレベル (F)<br>SWAP SELL<br>最小ロット/ステップ</div>
  <div class="p row" style="left:421px;top:532px">0<br>18.71<br>0.01/0.01</div>
  <div class="p sec" style="top:572px;border-bottom:none">日付別の利益 GOLD &nbsp;#77777<div class="tri-dn"></div></div>
  <div class="p" style="left:0;top:584px;width:536px;height:24px;background:#263238"></div>
  <div class="p" style="left:3px;top:590px;font-size:14px;line-height:16px"><span style="color:#00e5ee">EA</span> <span style="color:#2196f3">Pad</span></div>
  <div class="p" style="left:54px;top:587px;font-size:19px;line-height:20px;color:#ff4081;transform:scaleX(0.92);transform-origin:left">PRO</div>
  <div class="p" style="left:232px;top:596px;width:36px;height:2px;background:#00e5ee"></div>
  <div class="p" style="left:238px;top:599px;width:36px;height:2px;background:#2196f3"></div>
  <div class="p" style="left:244px;top:602px;width:42px;height:2px;background:#ff4081"></div>
  <div class="p" style="left:383px;top:591px;color:#fff;font-size:14px;line-height:16px">EXPFOREX 2008-2023</div>
</div>

<svg class="ovl" width="1920" height="789" viewBox="0 0 1920 789" style="position:absolute;left:0;top:0;pointer-events:none">
<g stroke="#ff5a2a" stroke-width="1.1" stroke-dasharray="2.5 3" fill="none"><path d="M108 446L106 470"/><path d="M105.6 475L96.7 504"/><path d="M89.5 492L79.7 543"/><path d="M167.4 497L195 561"/><path d="M482 590L503.5 630L514.6 647"/><path d="M458 625L479.8 635.4L492.4 640.3L510.5 648"/><path d="M450 692L496.5 659L512 650"/><path d="M698.5 662L713 590"/><path d="M1111 250L1149 239"/><path d="M1303 249L1340 266L1358 276L1371 281L1406 295"/><path d="M1291 276L1340 278.5L1394 282"/><path d="M1502 368L1514 385"/><path d="M1385 281L1408.6 295.5"/></g>
<g stroke="#1a6fd0" stroke-width="1.1" stroke-dasharray="2.5 3" fill="none"><path d="M1243 236L1258 266"/><path d="M1467 305L1486 344"/></g>
<path d="M105.4 467h3v3h3l-4.5 4.5l-4.5 -4.5h3z" fill="#e8491d" stroke="#fff" stroke-width="0.9"/>
<path d="M165.0 489.4h3v3h3l-4.5 4.5l-4.5 -4.5h3z" fill="#e8491d" stroke="#fff" stroke-width="0.9"/>
<path d="M92.9 503.3h3v3h3l-4.5 4.5l-4.5 -4.5h3z" fill="#e8491d" stroke="#fff" stroke-width="0.9"/>
<path d="M76.9 543.4h3v3h3l-4.5 4.5l-4.5 -4.5h3z" fill="#e8491d" stroke="#fff" stroke-width="0.9"/>
<path d="M480.7 582.4h3v3h3l-4.5 4.5l-4.5 -4.5h3z" fill="#e8491d" stroke="#fff" stroke-width="0.9"/>
<path d="M456.8 616.8h3v3h3l-4.5 4.5l-4.5 -4.5h3z" fill="#e8491d" stroke="#fff" stroke-width="0.9"/>
<path d="M448.8 689.6h3v3h3l-4.5 4.5l-4.5 -4.5h3z" fill="#e8491d" stroke="#fff" stroke-width="0.9"/>
<path d="M697.0 663.3h3v3h3l-4.5 4.5l-4.5 -4.5h3z" fill="#e8491d" stroke="#fff" stroke-width="0.9"/>
<path d="M1109.0 241.3h3v3h3l-4.5 4.5l-4.5 -4.5h3z" fill="#e8491d" stroke="#fff" stroke-width="0.9"/>
<path d="M1257.0 264.5h3v3h3l-4.5 4.5l-4.5 -4.5h3z" fill="#e8491d" stroke="#fff" stroke-width="0.9"/>
<path d="M1289.0 267.5h3v3h3l-4.5 4.5l-4.5 -4.5h3z" fill="#e8491d" stroke="#fff" stroke-width="0.9"/>
<path d="M1300.8 240.4h3v3h3l-4.5 4.5l-4.5 -4.5h3z" fill="#e8491d" stroke="#fff" stroke-width="0.9"/>
<path d="M1485.1 344h3v3h3l-4.5 4.5l-4.5 -4.5h3z" fill="#e8491d" stroke="#fff" stroke-width="0.9"/>
<path d="M1500.8 360.5h3v3h3l-4.5 4.5l-4.5 -4.5h3z" fill="#e8491d" stroke="#fff" stroke-width="0.9"/>
<path d="M109.1 446.4h3v-3h3l-4.5 -4.5l-4.5 4.5h3z" fill="#1060b8" stroke="#fff" stroke-width="0.9"/>
<path d="M88.9 492h3v-3h3l-4.5 -4.5l-4.5 4.5h3z" fill="#1060b8" stroke="#fff" stroke-width="0.9"/>
<path d="M193.0 569.3h3v-3h3l-4.5 -4.5l-4.5 4.5h3z" fill="#1060b8" stroke="#fff" stroke-width="0.9"/>
<path d="M512.9 657.2h3v-3h3l-4.5 -4.5l-4.5 4.5h3z" fill="#1060b8" stroke="#fff" stroke-width="0.9"/>
<path d="M712.9 589.3h3v-3h3l-4.5 -4.5l-4.5 4.5h3z" fill="#1060b8" stroke="#fff" stroke-width="0.9"/>
<path d="M1148.8 245.1h3v-3h3l-4.5 -4.5l-4.5 4.5h3z" fill="#1060b8" stroke="#fff" stroke-width="0.9"/>
<path d="M1241.3 236.6h3v-3h3l-4.5 -4.5l-4.5 4.5h3z" fill="#1060b8" stroke="#fff" stroke-width="0.9"/>
<path d="M1393.0 289.9h3v-3h3l-4.5 -4.5l-4.5 4.5h3z" fill="#1060b8" stroke="#fff" stroke-width="0.9"/>
<path d="M1408.9 305.8h3v-3h3l-4.5 -4.5l-4.5 4.5h3z" fill="#1060b8" stroke="#fff" stroke-width="0.9"/>
<path d="M1465.4 305h3v-3h3l-4.5 -4.5l-4.5 4.5h3z" fill="#1060b8" stroke="#fff" stroke-width="0.9"/>
<path d="M1513.3 392h3v-3h3l-4.5 -4.5l-4.5 4.5h3z" fill="#1060b8" stroke="#fff" stroke-width="0.9"/>
<g font-family="Liberation Sans, sans-serif" font-size="12" letter-spacing="0.8"><text transform="translate(1133 275) rotate(90)" fill="#ff4a1c">-1.75 J</text><text transform="translate(1138 297) rotate(90)" fill="#ff4a1c">-1.75 J</text><text transform="translate(1244 302) rotate(90)" fill="#ff4a1c">-15.20 J</text><text transform="translate(1247 334) rotate(90)" fill="#ff4a1c">-15.20 J</text><text transform="translate(1470 353) rotate(90)" fill="#ff4a1c">-7.75 J</text><text transform="translate(1474 399) rotate(90)" fill="#ff4a1c">-7.75 J</text><text transform="translate(1403 268) rotate(-90)" fill="#3cb043">+0.60 J</text><text transform="translate(1406 262) rotate(-90)" fill="#3cb043">+0.60 J</text><text transform="translate(1420 287) rotate(-90)" fill="#3cb043">+6.55 J</text><text transform="translate(1423 281) rotate(-90)" fill="#3cb043">+6.55 J</text><text transform="translate(1522 353) rotate(-90)" fill="#3cb043">+2.10 J</text><text transform="translate(702 682) rotate(90)" fill="#ff4a1c">-1.80 J</text></g>
</svg>

<div class="tabbar">
  <div class="abs" style="left:4px;top:-1px;width:72px;height:19px;background:#fff;border:1px solid #000;border-top:none;font-size:11.5px;line-height:20px;color:#000;text-align:center">GOLD,M5</div>
  <div class="abs" style="left:87px;top:4px;font-size:11.5px;color:#555">GOLD,M1</div>
  <div class="abs" style="left:149px;top:1px;width:1px;height:14px;background:#555"></div>
  <div class="abs" style="left:161px;top:4px;font-size:11.5px;color:#555">GOLD,M15</div>
  <div class="abs" style="left:230px;top:1px;width:1px;height:14px;background:#555"></div>
  <div class="abs" style="left:242px;top:4px;font-size:11.5px;color:#555">GOLD,M30</div>
  <div class="abs" style="left:311px;top:1px;width:1px;height:14px;background:#555"></div>
  <div class="abs" style="left:323px;top:4px;font-size:11.5px;color:#555">GOLD,H1</div>
  <div class="abs" style="left:384px;top:1px;width:1px;height:14px;background:#555"></div>
  <div class="abs" style="left:396px;top:4px;font-size:11.5px;color:#555">GOLD,H4</div>
  <div class="abs" style="left:457px;top:1px;width:1px;height:14px;background:#555"></div>
  <div class="abs" style="left:469px;top:4px;font-size:11.5px;color:#555">GOLD,Daily</div>
  <div class="abs" style="left:1881px;top:6px;width:0;height:0;border-top:4px solid transparent;border-bottom:4px solid transparent;border-right:4px solid #bbb"></div>
  <div class="abs" style="left:1903px;top:6px;width:0;height:0;border-top:4px solid transparent;border-bottom:4px solid transparent;border-left:4px solid #bbb"></div>
</div>

<!-- toolbox -->
<div class="abs" style="left:0;top:814px;width:1920px;height:1px;background:#a0a0a0"></div>
<div class="abs" style="left:0;top:815px;width:16px;height:191px;background:#bfcddb"></div>
<div class="abs" style="left:3px;top:816px;font-size:15px;color:#000;line-height:18px">&#x2715;</div>
<div class="abs" style="left:0px;top:930px;width:16px;height:76px;overflow:hidden"><div style="position:absolute;left:-31px;top:31px;width:78px;height:14px;transform:rotate(-90deg);font-size:10.5px;line-height:14px;color:#222;white-space:nowrap;text-align:right;letter-spacing:-0.5px">ツールボックス</div></div>
<div class="abs" style="left:18px;top:815px;width:1902px;height:24px;background:#fff"></div>
<div class="abs" style="left:24px;top:818px;font-size:12px;color:#333;letter-spacing:-1px">シンボル</div>
<div class="abs" style="left:81px;top:825px;width:0;height:0;border-left:4px solid transparent;border-right:4px solid transparent;border-top:4px solid #222"></div>
<div class="abs" style="left:205px;top:815px;width:1px;height:24px;background:#c8c8c8"></div>
<div class="abs" style="left:211px;top:818px;font-size:12px;color:#333;letter-spacing:-1px">チケット</div>
<div class="abs" style="left:335px;top:815px;width:1px;height:24px;background:#c8c8c8"></div>
<div class="abs" style="left:336px;top:818px;width:114px;font-size:12px;color:#333;text-align:right">時間</div>
<div class="abs" style="left:455px;top:815px;width:1px;height:24px;background:#c8c8c8"></div>
<div class="abs" style="left:456px;top:818px;width:181px;font-size:12px;color:#333;text-align:right">種別</div>
<div class="abs" style="left:643px;top:815px;width:1px;height:24px;background:#c8c8c8"></div>
<div class="abs" style="left:644px;top:818px;width:138px;font-size:12px;color:#333;text-align:right">数量</div>
<div class="abs" style="left:788px;top:815px;width:1px;height:24px;background:#c8c8c8"></div>
<div class="abs" style="left:789px;top:818px;width:138px;font-size:12px;color:#333;text-align:right">価格</div>
<div class="abs" style="left:933px;top:815px;width:1px;height:24px;background:#c8c8c8"></div>
<div class="abs" style="left:934px;top:818px;width:138px;font-size:12px;color:#333;text-align:right">S/L (ストップロス)</div>
<div class="abs" style="left:1078px;top:815px;width:1px;height:24px;background:#c8c8c8"></div>
<div class="abs" style="left:1079px;top:818px;width:138px;font-size:12px;color:#333;text-align:right">T/P (テイクプロフィット)</div>
<div class="abs" style="left:1223px;top:815px;width:1px;height:24px;background:#c8c8c8"></div>
<div class="abs" style="left:1224px;top:818px;width:138px;font-size:12px;color:#333;text-align:right">価格</div>
<div class="abs" style="left:1368px;top:815px;width:1px;height:24px;background:#c8c8c8"></div>
<div class="abs" style="left:1369px;top:818px;width:152px;font-size:12px;color:#333;text-align:right">利益</div>
<div class="abs" style="left:1527px;top:815px;width:1px;height:24px;background:#c8c8c8"></div>
<div class="abs" style="left:1528px;top:818px;width:386px;font-size:12px;color:#333;text-align:right">コメント</div>
<div class="abs" style="left:18px;top:839px;width:1902px;height:20px;background:#c8c8c8"></div>
<div class="abs" style="left:26px;top:841px;font-size:11.5px;font-weight:bold;color:#222;white-space:nowrap;letter-spacing:-0.2px">&bull;&nbsp;&nbsp;残高: 39971 pips &nbsp;&nbsp;利益: 0 &nbsp;&nbsp;有効証拠金: 39971</div>
<div class="abs" style="left:1400px;top:841px;width:121px;font-size:11.5px;font-weight:bold;color:#111;text-align:right">0</div>
<div class="abs" style="left:18px;top:859px;width:1902px;height:123px;background:#fff"></div>
<div class="abs" style="left:18px;top:981px;width:1902px;height:25px;background:#f0f0f0;border-top:1px solid #000"></div>
<div class="abs" style="left:23px;top:981px;width:53px;height:20px;background:#fff;border:1px solid #000;border-top:none;font-size:12px;line-height:18px;color:#222;text-align:center;letter-spacing:-1px">トレード</div>
<div class="abs" style="left:86px;top:983px;font-size:12px;color:#666">履歴</div>
<div class="abs" style="left:120px;top:985px;width:1px;height:15px;background:#555"></div>
<div class="abs" style="left:130px;top:983px;font-size:12px;color:#666">操作</div>
<div class="abs" style="left:164px;top:985px;width:1px;height:15px;background:#555"></div>
<div class="abs" style="left:174px;top:983px;font-size:12px;color:#666;letter-spacing:-1px">ジャーナル</div>
<div class="abs" style="left:1813px;top:959px;width:107px;height:47px;background:#000"></div><div class="abs" style="left:1800px;top:958px;width:81px;color:#fff;font-size:11.5px;line-height:15.5px;text-align:right;white-space:nowrap">17:07:00<br>日 曜 日&nbsp;<br><span style="letter-spacing:0.2px">2025/10/26</span></div>
</body></html>
